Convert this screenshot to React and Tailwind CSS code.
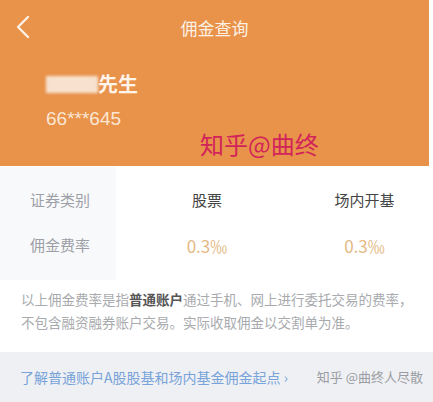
import React from 'react';

const FONT = { fontFamily: '"Noto Sans CJK SC", "Noto Sans", sans-serif' };

const rows = [
    { label: '证券类别', stock: '股票', fund: '场内开基', head: true },
    { label: '佣金费率', stock: '0.3‰', fund: '0.3‰', head: false },
];

export default function App() {
    return (
        <div className="w-[433px] h-[402px] bg-white overflow-hidden" style={FONT}>
            {/* Header */}
            <div className="h-[166px] bg-[#e8924a] mr-[4px] relative">
                <div className="h-[54px] flex items-center justify-center relative">
                    <svg className="absolute left-[15px] top-[15px]" width="16" height="24" viewBox="0 0 16 24" fill="none">
                        <path d="M13 2 L3 12 L13 22" stroke="#fdf1e4" strokeWidth="2.4" strokeLinecap="round" strokeLinejoin="round" />
                    </svg>
                    <span className="text-[17px] text-[#fdf1e4] leading-none">佣金查询</span>
                </div>
                <div className="pl-[46px] pt-[18px]">
                    <div className="flex items-center h-[24px]">
                        <div className="w-[52px] h-[17px] bg-[#f8e2cf] blur-[1.5px]" />
                        <span className="text-[20px] font-bold text-[#fff4ea] leading-none">先生</span>
                    </div>
                    <div className="text-[19px] text-[#fbe6d3] mt-[13px] leading-none" style={{ fontFamily: '"Liberation Sans", sans-serif' }}>66***645</div>
                </div>
                <div className="absolute left-[200px] top-[132px] text-[24px] text-[#d2245a] leading-none">知乎@曲终</div>
            </div>

            {/* Table */}
            <div className="flex h-[113px] mt-[1px]">
                <div className="w-[116px] bg-[#f8f9fb] flex flex-col pt-[11px] pb-[12px]">
                    {rows.map((r) => (
                        <div key={r.label} className="flex-1 flex items-center justify-center text-[15px] text-[#9c9fa6] pl-[4px]">
                            {r.label}
                        </div>
                    ))}
                </div>
                <div className="flex-1 flex flex-col pt-[11px] pb-[12px]">
                    {rows.map((r) => (
                        <div key={r.label} className="flex-1 flex items-center">
                            <div className={`w-[184px] text-center pr-[2px] ${r.head ? 'text-[15px] text-[#444]' : 'text-[17px] text-[#e4b985]'}`}>{r.stock}</div>
                            <div className={`flex-1 text-center pr-[4px] ${r.head ? 'text-[15px] text-[#444]' : 'text-[17px] text-[#e4b985]'}`}>{r.fund}</div>
                        </div>
                    ))}
                </div>
            </div>

            {/* Note */}
            <div className="px-[21px] pt-[8px] h-[72px] text-[13.5px] leading-[23px] text-[#a8aaae] whitespace-nowrap">
                <div>以上佣金费率是指<span className="font-bold text-[#555]">普通账户</span>通过手机、网上进行委托交易的费率，</div>
                <div>不包含融资融券账户交易。实际收取佣金以交割单为准。</div>
            </div>

            {/* Bottom link */}
            <div className="h-[50px] bg-[#eff0f4] flex items-center justify-between pl-[20px] pr-[10px]">
                <span className="text-[14px] text-[#78a3d9]">了解普通账户A股股基和场内基金佣金起点 ›</span>
                <span className="text-[13px] text-[#9a9ca1]">知乎 @曲终人尽散</span>
            </div>
        </div>
    );
}
